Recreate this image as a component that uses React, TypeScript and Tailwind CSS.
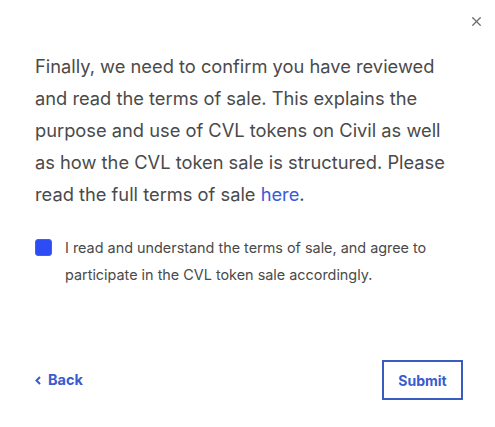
import { X } from "lucide-react";

export default function App() {
  return (
    <div className="relative h-[427px] w-[495px] bg-white font-['Inter',sans-serif]">
      <button className="absolute right-[11px] top-[14px] text-[#6b6b6b]" aria-label="Close">
        <X size={15} strokeWidth={2} />
      </button>

      <div className="flex h-full flex-col px-[35px] pt-[50px]">
        <p className="w-[412px] text-[18.3px] leading-[32px] text-[#4a4a4a]">
          Finally, we need to confirm you have reviewed and read the terms of sale. This explains
          the purpose and use of CVL tokens on Civil as well as how the CVL token sale is
          structured. Please read the full terms of sale{" "}
          <a href="#" className="text-[#3a5bd9]">here</a>.
        </p>

        <label className="mt-[24px] flex items-start gap-[13px]">
          <span className="mt-[5px] h-[17px] w-[17px] shrink-0 rounded-[3px] border border-[#4a63c9] bg-[#2d4cf5]" />
          <span className="text-[14.4px] leading-[27px] text-[#4a4a4a]">
            I read and understand the terms of sale, and agree to participate in the CVL token sale
            accordingly.
          </span>
        </label>

        <div className="mt-auto mb-[27px] flex items-center justify-between">
          <a href="#" className="flex items-center gap-[7px] text-[14.5px] font-bold text-[#3a5bd0]">
            <svg width="6" height="9" viewBox="0 0 6 9" fill="none" stroke="currentColor" strokeWidth="2">
              <polyline points="5,1 1.5,4.5 5,8" />
            </svg>
            Back
          </a>
          <button className="mr-[-3px] h-[40px] w-[81px] border-2 border-[#3a5bbf] text-[14px] font-bold text-[#3a5bd0]">
            Submit
          </button>
        </div>
      </div>
    </div>
  );
}
